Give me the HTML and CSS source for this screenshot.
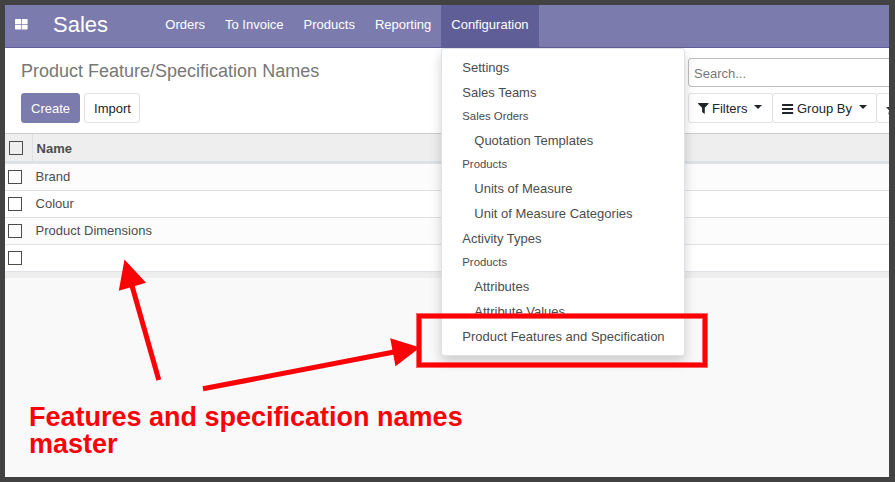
FILE: index.html
```html
<!DOCTYPE html>
<html lang="en">
<head>
<meta charset="utf-8">
<title>Sales - Product Feature/Specification Names</title>
<link rel="stylesheet" href="styles.css">
</head>
<body>
<div class="window">
  <header class="navbar">
    <svg class="apps" width="13" height="11" viewBox="0 0 13 11"><path fill="#fff" d="M.7 0H5.500Q6.200 0 6.200 .7V4.900H0V.7Q0 0 .7 0ZM7.500 0H11.900Q12.600 0 12.600 .7V4.900H6.900V.7Q6.900 0 7.500 0ZM0 5.700H6.200V10.400H.7Q0 10.400 0 9.700ZM6.900 5.700H12.600V9.700Q12.600 10.400 11.900 10.400H6.900Z"/></svg>
    <span class="brand">Sales</span>
    <nav class="menu">
      <a>Orders</a><a>To Invoice</a><a>Products</a><a>Reporting</a>
      <div class="open"><a>Configuration</a>
        <div class="dropdown">
          <a>Settings</a>
          <a>Sales Teams</a>
          <h6>Sales Orders</h6>
          <a class="sub">Quotation Templates</a>
          <h6>Products</h6>
          <a class="sub">Units of Measure</a>
          <a class="sub">Unit of Measure Categories</a>
          <a>Activity Types</a>
          <h6>Products</h6>
          <a class="sub">Attributes</a>
          <a class="sub">Attribute Values</a>
          <a>Product Features and Specification</a>
        </div>
      </div>
    </nav>
  </header>
  <section class="panel">
    <div class="left">
      <h1>Product Feature/Specification Names</h1>
      <div class="buttons"><button class="primary">Create</button><button class="import">Import</button></div>
    </div>
    <div class="right">
      <div class="search">Search...</div>
      <div class="filters">
        <button class="filter"><svg width="11" height="11" viewBox="0 0 11 11"><path fill="#212529" d="M.5 0H10Q11 .2 10.400 1L6.800 4.800V10.200Q6.600 11 5.900 10.600L4.100 8.900V4.800L.2 1Q-.2 .2 .5 0Z"/></svg><span>Filters</span><i></i></button>
        <button class="group"><svg width="12" height="10" viewBox="0 0 12 10"><path fill="#212529" d="M.1 0H11.100V2H.1ZM.1 4H11.100V6H.1ZM.1 8H11.100V10H.1Z"/></svg><span>Group By</span><i></i></button>
        <button class="fav"><svg width="12" height="12" viewBox="0 0 12 12"><path fill="#212529" d="M6 0 7.700 3.900 12 4.300 8.800 7.200 9.700 11.500 6 9.300 2.300 11.500 3.200 7.200 0 4.300 4.300 3.900Z"/></svg></button>
      </div>
    </div>
  </section>
  <table class="list">
    <thead><tr><th class="check"><b></b></th><th>Name</th></tr></thead>
    <tbody>
      <tr><td class="check"><b></b></td><td>Brand</td></tr>
      <tr><td class="check"><b></b></td><td>Colour</td></tr>
      <tr><td class="check"><b></b></td><td>Product Dimensions</td></tr>
      <tr><td class="check"><b></b></td><td></td></tr>
    </tbody>
  </table>
  <div class="list-foot"></div>
</div>
<svg class="marks" width="895" height="482" viewBox="0 0 895 482">
  <g fill="#fb0207">
    <path d="M124.500 259.500 146 282.800 118.800 290.700ZM420 347.500 390.200 338.200 395.500 366.300Z"/>
    <path d="M131.500 284 158.800 380M203 388.800 394 352" stroke="#fb0207" stroke-width="5"/>
  </g>
  <rect x="419" y="316" width="286" height="49" fill="none" stroke="#fb0207" stroke-opacity=".6" stroke-width="6"/>
  <rect x="419" y="316" width="286" height="49" fill="none" stroke="#fb0207" stroke-width="4"/>
</svg>
<p class="note">Features and specification names<br>master</p>
</body>
</html>
```
FILE: styles.css
```css
* { box-sizing: border-box; }
body {
  margin: 0;
  height: 482px;
  padding: 5px 6px 5px 5px;
  background: #424242;
  font: 13px/20px "Liberation Sans", Arial, sans-serif;
  color: #4c4c4c;
  overflow: hidden;
}
.window { height: 472px; background: #f9f9f9; overflow: hidden; }
.navbar {
  display: flex;
  height: 43px;
  background: #7c7bad;
  border-bottom: 1px solid #5f5e97;
  color: #fff;
}
.apps { margin: 14px 0 0 10px; }
.brand { width: 122.300px; margin-left: 25px; font-size: 22px; line-height: 39px; }
.menu { display: flex; line-height: 39px; margin-left: -20px; }
.menu > a, .open > a { display: block; padding: 0 10px; }
.open { position: relative; height: 42px; background: #5f5e97; }
.dropdown {
  position: absolute;
  z-index: 2;
  top: 43px;
  left: 0;
  width: 244px;
  height: 308px;
  padding: 6px 0;
  background: #fff;
  border: 1px solid #dee2e6;
  border-radius: 3px;
  box-shadow: 0 6px 12px rgba(0, 0, 0, .175);
  color: #4c4c4c;
}
.dropdown a { display: block; height: 25px; padding-left: 20px; line-height: 25px; }
.dropdown .sub { padding-left: 32px; }
.dropdown h6 { margin: 0; height: 23px; padding-left: 20px; font-weight: 400; font-size: 11.375px; line-height: 22px; }
.panel {
  display: flex;
  justify-content: space-between;
  height: 86px;
  background: #fff;
  border-bottom: 1px solid #ccc;
}
.left { padding: 10px 0 0 16px; }
h1 { margin: 0 0 9px; font-weight: 400; font-size: 18px; line-height: 26px; color: #777; }
.buttons { display: flex; gap: 4px; }
button {
  display: flex;
  align-items: center;
  height: 30px;
  padding: 2px 9px 0;
  background: #fff;
  border: 1px solid #dee2e6;
  border-radius: 3px;
  font: inherit;
  color: #212529;
  white-space: nowrap;
}
.primary { background: #7c7bad; border-color: #7c7bad; color: #fff; }
.import { width: 56px; }
.right { width: 201px; padding-top: 10px; overflow: hidden; }
.search {
  width: 240px;
  height: 29px;
  margin-bottom: 6px;
  padding-left: 5px;
  border: 1px solid #bfbfbf;
  border-radius: 3px;
  line-height: 29px;
  color: #777;
}
.filters { display: flex; width: 300px; }
.filters svg { margin-top: -1px; }
.filters span { margin-left: 3px; }
.filters i { margin: -4px 0 0 7px; border: 4px solid transparent; border-top-color: #212529; border-bottom: 0; }
.filter { width: 85px; }
.group { width: 105px; margin-left: -1px; }
.fav { width: 100px; margin-left: -1px; }
.list { width: 100%; border-collapse: separate; border-spacing: 0; table-layout: fixed; background: #fff; }
th, td { padding: 0 0 0 2.600px; text-align: left; }
th { height: 30px; padding: 2px 0 0 3.600px; background: #eee; border-bottom: 3px solid #dee2e6; }
td { height: 27px; padding-bottom: 1px; border-bottom: 1px solid #dee2e6; }
.check { width: 28px; }
td.check { padding-left: 3px; }
th.check { padding: 0 0 0 4px; border-right: 1px solid #dee2e6; }
tbody tr:nth-child(odd) { background: #fcfcfc; }
.check b { display: block; width: 14px; height: 14px; border: 1px solid #4c4c4c; background: #fff; }
th.check b { background: transparent; }
.list-foot { height: 6px; background: #eee; }
.marks { position: absolute; z-index: 3; top: 0; left: 0; }
.note {
  position: absolute;
  z-index: 4;
  top: 404px;
  left: 29px;
  margin: 0;
  font-weight: 700;
  font-size: 27px;
  line-height: 27px;
  color: #fb0207;
  white-space: nowrap;
}
```
